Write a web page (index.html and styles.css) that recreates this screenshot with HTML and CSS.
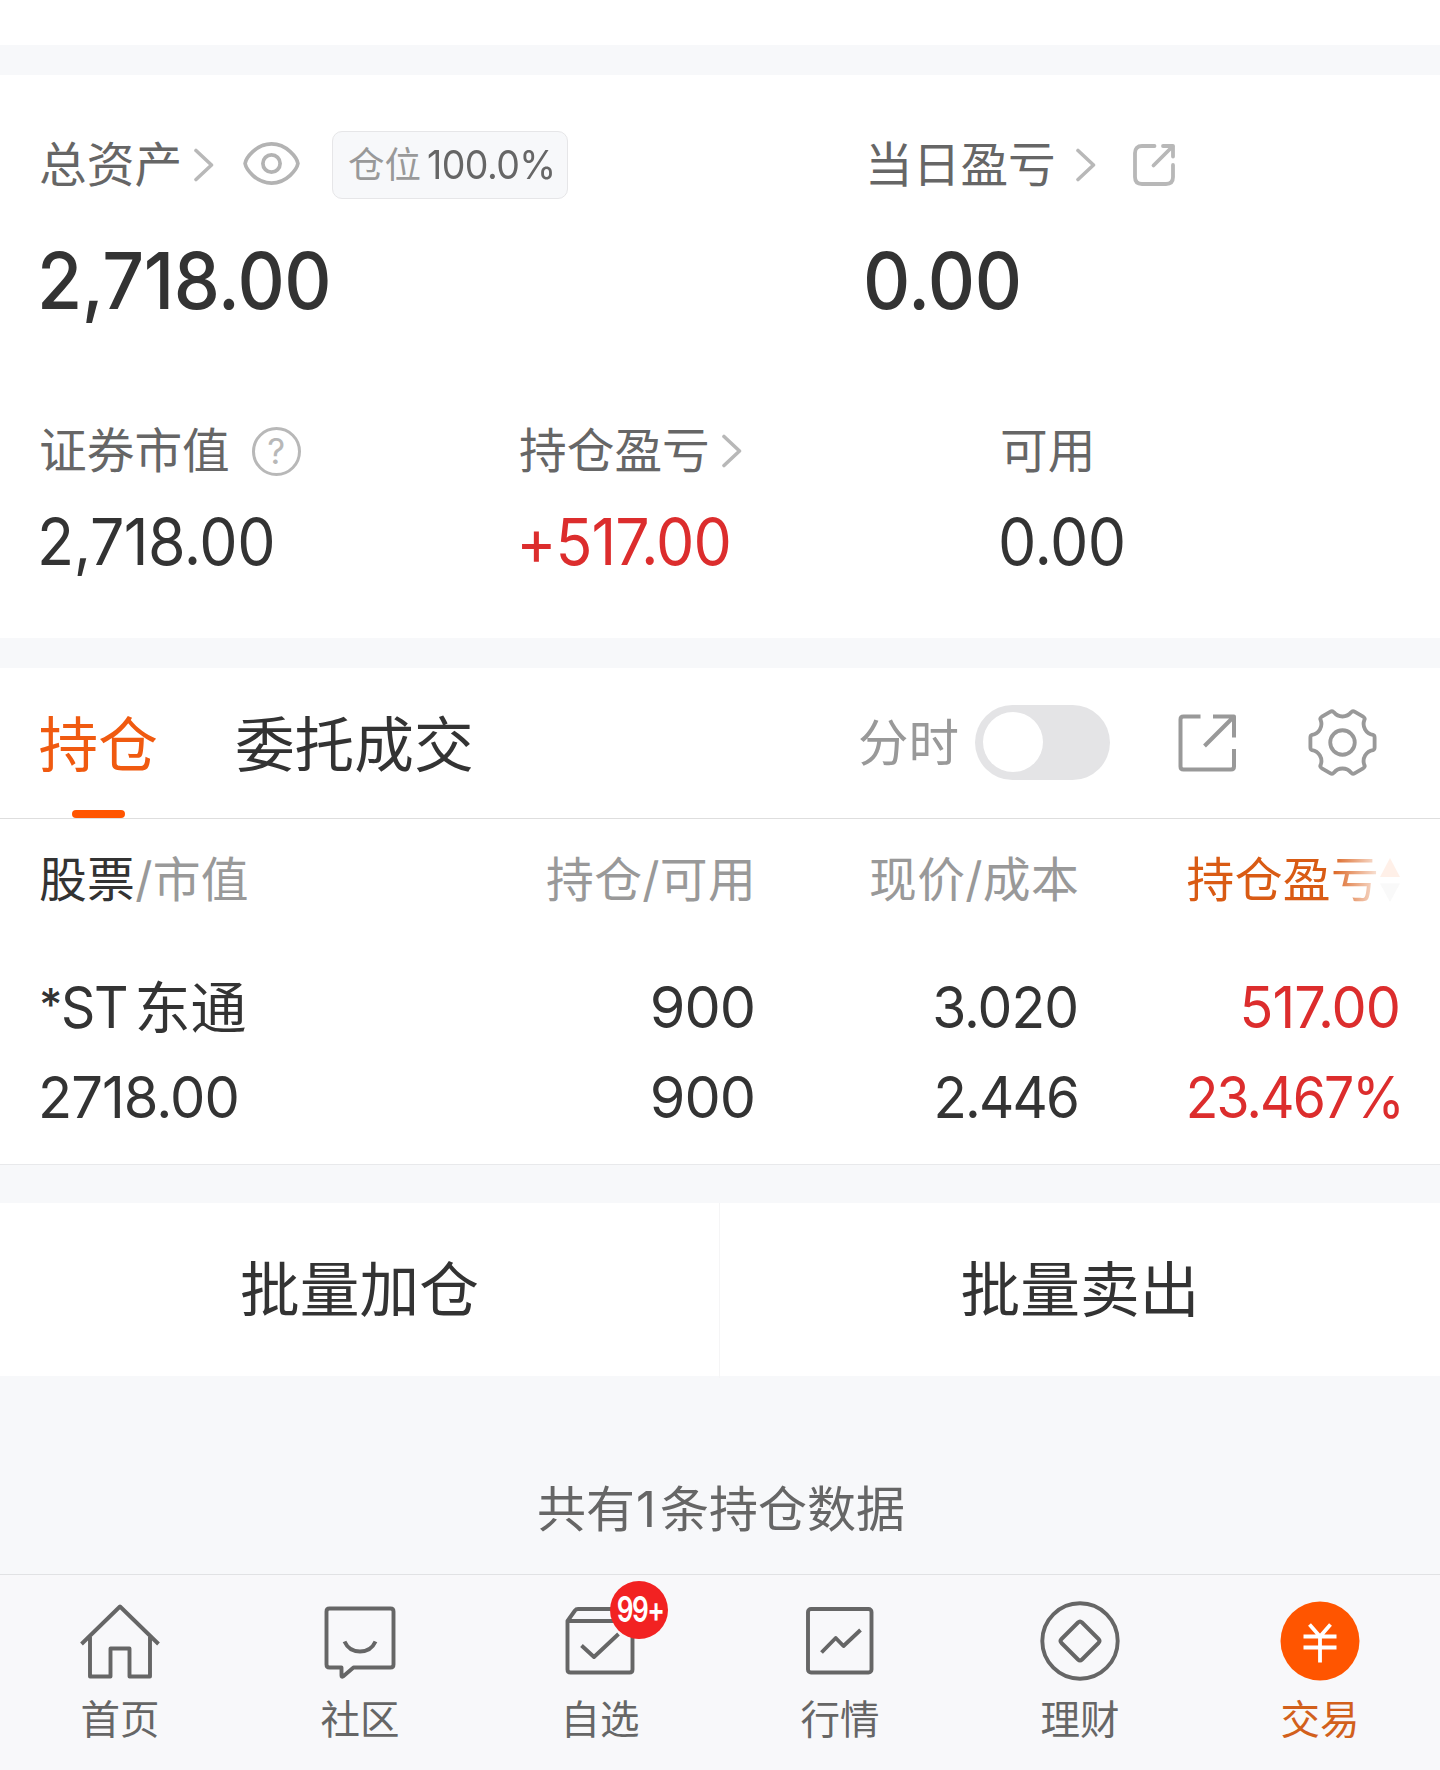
FILE: index.html
```html
<!DOCTYPE html>
<html lang="zh-CN">
<head>
<meta charset="utf-8">
<title>持仓</title>
<link rel="stylesheet" href="styles.css">
</head>
<body>
<svg class="defs" width="0" height="0">
  <symbol id="chevron" viewBox="0 0 20 34"><path d="M2 2.5 17.5 17 2 31.5" fill="none" stroke="#b8b8b8" stroke-width="3.6" stroke-linecap="round" stroke-linejoin="round"/></symbol>
</svg>
<div class="page">
  <section class="summary">
    <div class="totals">
      <div class="total">
        <div class="label-row">
          <span class="label">总资产</span>
          <svg class="chevron chevron-asset"><use href="#chevron"/></svg>
          <svg class="eye" width="57" height="45" viewBox="0 0 58 46" fill="none" stroke="#b3b3b3" stroke-width="3.8"><path d="M2 23C3 17.500 13 3 29 3S55 17.500 56 23C55 28.500 45 43 29 43S3 28.500 2 23Z"/><circle cx="29" cy="23" r="8.800"/></svg>
          <span class="chip"><span class="chip-name">仓位</span><span class="chip-value">100.0%</span></span>
        </div>
        <div class="big">2,718.00</div>
      </div>
      <div class="total">
        <div class="label-row">
          <span class="label">当日盈亏</span>
          <svg class="chevron chevron-day"><use href="#chevron"/></svg>
          <svg class="share" width="44" height="44" viewBox="0 0 44 44" fill="none" stroke="#b8b8b8" stroke-width="3.8" stroke-linecap="round" stroke-linejoin="round"><path d="M22.500 3H10Q3 3 3 10V34Q3 41 10 41H34Q41 41 41 34V22"/><path d="M31 3H41V13.500M41 3 21.500 22.500"/></svg>
        </div>
        <div class="big">0.00</div>
      </div>
    </div>
    <div class="details">
      <div class="detail">
        <div class="label-row"><span class="label">证券市值</span>
          <span class="help">?</span></div>
        <div class="mid">2,718.00</div>
      </div>
      <div class="detail">
        <div class="label-row"><span class="label">持仓盈亏</span><svg class="chevron chevron-hold"><use href="#chevron"/></svg></div>
        <div class="mid up plus">+517.00</div>
      </div>
      <div class="detail">
        <div class="label-row"><span class="label">可用</span></div>
        <div class="mid">0.00</div>
      </div>
    </div>
  </section>

  <section class="holdings">
    <div class="tabs">
      <div class="tab active">持仓</div>
      <div class="tab">委托成交</div>
      <div class="tools">
        <span class="tool-label">分时</span>
        <span class="switch"><span class="knob"></span></span>
        <svg class="open" width="60" height="60" viewBox="0 0 60 60" fill="none" stroke="#999" stroke-width="4" stroke-linejoin="round"><path d="M23.500 3.500H6.500Q3.500 3.500 3.500 6.500V53.500Q3.500 56.500 6.500 56.500H54Q57 56.500 57 53.500V36M36 3.500H57V24.500M57 3.500 27.500 33"/></svg>
        <svg class="gear" width="69" height="69" viewBox="-36 -36 72 72" fill="none" stroke="#999" stroke-width="4" stroke-linejoin="round"><path d="M-9-31.500A11.500 11.500 0 0 0 9-31.500Q10.500-33.500 13-32L21.500-27Q24-25 22.800-23.500A11.500 11.500 0 0 0 31.800-8Q33.500-7.500 33.500-5V5Q33.500 7.500 31.800 8A11.500 11.500 0 0 0 22.800 23.500Q24 25 21.500 27L13 32Q10.500 33.500 9 31.500A11.500 11.500 0 0 0-9 31.500Q-10.500 33.500-13 32L-21.500 27Q-24 25-22.800 23.500A11.500 11.500 0 0 0-31.800 8Q-33.500 7.500-33.500 5V-5Q-33.500-7.500-31.800-8A11.500 11.500 0 0 0-22.800-23.500Q-24-25-21.500-27L-13-32Q-10.500-33.500-9-31.500Z"/><circle r="12.800"/></svg>
      </div>
    </div>
    <div class="grid head">
      <div><b>股票</b>/市值</div>
      <div>持仓/可用</div>
      <div>现价/成本</div>
      <div class="sorted"><span>持仓盈亏</span><svg width="22" height="46" viewBox="0 0 22 46"><path d="M11 1 21 20H1Z" fill="#ff5500" opacity=".6"/><path d="M11 45 21 26.500H1Z" fill="#999" opacity=".4"/></svg></div>
    </div>
    <div class="grid line">
      <div class="name"><span class="star">*</span><span class="prefix">ST</span><span class="cjk">东通</span></div><div>900</div><div class="price">3.020</div><div class="up profit">517.00</div>
    </div>
    <div class="grid line">
      <div class="worth">2718.00</div><div>900</div><div class="cost">2.446</div><div class="up pct">23.467%</div>
    </div>
  </section>

  <div class="actions">
    <div class="action">批量加仓</div>
    <div class="action">批量卖出</div>
  </div>
  <div class="count">共有<span class="num">1</span>条持仓数据</div>

  <nav class="nav">
    <div class="item"><svg class="icon" viewBox="80 1601 80 80"><path d="M81.500 1644 120 1606.500 158.500 1644M90 1637V1676.500H110.500V1648.500H129.500V1676.500H150V1637"/></svg><span>首页</span></div>
    <div class="item"><svg class="icon" viewBox="320 1601 80 80"><path d="M329.500 1608.500H390.500Q393.500 1608.500 393.500 1611.500V1664.500Q393.500 1667.500 390.500 1667.500H353.500L343 1676.500Q341.500 1677.500 341.500 1675.500V1667.500H329.500Q326.500 1667.500 326.500 1664.500V1611.500Q326.500 1608.500 329.500 1608.500Z"/><path d="M344.500 1641.500Q349 1651.500 360 1651.500T375.500 1641.500"/></svg><span>社区</span></div>
    <div class="item"><svg class="icon" viewBox="560 1601 80 80"><path d="M567.500 1621H632.500V1669.500Q632.500 1672.500 629.500 1672.500H570.500Q567.500 1672.500 567.500 1669.500V1621L575 1610.500Q576 1609 578 1609H622Q624 1609 625 1610.500L632.500 1621M581.500 1645.500 594 1657 618.500 1634"/></svg><span>自选</span><em class="badge"><i>99+</i></em></div>
    <div class="item"><svg class="icon" viewBox="800 1601 80 80"><rect x="808" y="1609" width="63.500" height="63.500" rx="3"/><path d="M821.500 1652.500 835.700 1638 843.500 1646 860.500 1630"/></svg><span>行情</span></div>
    <div class="item"><svg class="icon" viewBox="1040 1601 80 80"><circle cx="1080" cy="1641" r="37.700"/><path d="M1078 1622.500Q1080 1620.500 1082 1622.500L1098.500 1639Q1100.500 1641 1098.500 1643L1082 1659.500Q1080 1661.500 1078 1659.500L1061.500 1643Q1059.500 1641 1061.500 1639Z"/></svg><span>理财</span></div>
    <div class="item current"><svg class="icon" viewBox="1280 1601 80 80"><circle cx="1320" cy="1641" r="39.500" fill="#ff5500" stroke="none"/><path stroke="#fff" stroke-width="3.8" d="M1309.500 1624.500 1320 1636.500 1330.500 1624.500M1303.500 1636.500H1336.500M1303.500 1647.500H1336.500M1320 1636V1662.500"/></svg><span>交易</span></div>
  </nav>
</div>
</body>
</html>
```
FILE: styles.css
```css
* { box-sizing: border-box; }
body {
  margin: 0;
  background: #f7f8fa;
  color: #333;
  font-family: Inter, "Noto Sans CJK SC", sans-serif;
  white-space: nowrap;
}
svg { display: block; flex: none; }
.defs { position: absolute; }
.page {
  width: 1440px;
  height: 1770px;
  overflow: hidden;
  display: flex;
  flex-direction: column;
  padding-top: 45px;
  background: linear-gradient(#fff 45px, #f7f8fa 45px);
}

/* Account summary */
.summary {
  height: 563px;
  margin-top: 30px;
  padding: 55px 0 0 39px;
  background: #fff;
}
.totals { display: grid; grid-template-columns: 826px 1fr; }
.label-row { display: flex; align-items: center; height: 70px; }
.label { font-size: 47.700px; line-height: 72px; color: #666; }
.chevron { width: 20px; height: 34px; }
.chevron-asset { margin-left: 12px; }
.chevron-day { margin-left: 20px; }
.chevron-hold { margin-left: 12px; }
.eye { margin-left: 29px; margin-top: -4px; }
.share { margin-left: 36px; }
.chip {
  display: flex;
  align-items: center;
  width: 236px;
  height: 68px;
  margin-left: 32px;
  padding-left: 15px;
  border: 1px solid #e6e6e8;
  border-radius: 10px;
  background: #f7f8fa;
  line-height: 67px;
}
.chip-name { font-size: 36.500px; color: #999; }
.chip-value { margin-left: 6px; font-size: 39.500px; letter-spacing: -.600px; color: #666; transform: scaleX(.95); transform-origin: left; }
.big, .mid { transform-origin: left; }
.big { margin-top: 30px; height: 100px; line-height: 101px; font-size: 78px; font-weight: 450; letter-spacing: -.500px; text-indent: -2px; transform: scaleX(.94); }
.details { display: grid; grid-template-columns: 480px 481px 1fr; margin-top: 86px; }
.help {
  width: 49px;
  height: 49px;
  margin-left: 22px;
  border: 3.500px solid #b8b8b8;
  border-radius: 50%;
  color: #b8b8b8;
  font-size: 35px;
  line-height: 42px;
  text-align: center;
}
.mid { margin-top: 15px; height: 80px; line-height: 81px; font-size: 64px; letter-spacing: -.500px; text-indent: -2px; transform: scaleX(.95); }
.plus { text-indent: -3px; letter-spacing: -1px; }
.up { color: #dc2d2d; }

/* Holdings */
.holdings { height: 497px; margin-top: 30px; background: #fff; border-bottom: 1px solid #e8e9eb; }
.tabs {
  display: flex;
  height: 151px;
  padding-left: 38.500px;
  border-bottom: 1px solid #dedede;
}
.tab { position: relative; margin-right: 77px; line-height: 154px; font-size: 59.700px; }
.active { color: #f05a10; }
.active::after {
  content: "";
  position: absolute;
  left: 33.500px;
  bottom: 0;
  width: 53px;
  height: 8px;
  border-radius: 4px;
  background: #ff5500;
}
.tools { display: flex; align-items: center; height: 149px; margin-left: auto; padding-right: 63px; }
.tool-label { font-size: 50.500px; line-height: 149px; color: #999; }
.switch { width: 135px; height: 75px; margin-left: 16px; padding: 7px 8px; border-radius: 38px; background: #e4e4e6; }
.knob { display: block; width: 60px; height: 60px; border-radius: 50%; background: #fff; }
.open { margin-left: 67px; }
.gear { margin-left: 71px; }
.grid {
  display: grid;
  grid-template-columns: 400px 317px 323px 322px;
  padding-left: 38px;
  text-align: right;
}
.grid > :first-child { text-align: left; }
.head { height: 120px; line-height: 122px; font-size: 47.800px; letter-spacing: .300px; color: #999; }
.head > div { position: relative; left: 1px; }
.head b { font-weight: 400; color: #333; }
.sorted {
  display: flex;
  align-items: center;
  justify-content: flex-end;
  color: #d95b14;
  -webkit-mask-image: linear-gradient(90deg, #000 250px, rgba(0,0,0,.15) 300px);
}
.line { height: 90px; line-height: 91px; font-size: 57.500px; letter-spacing: -1px; }
.head + .line { margin-top: 23px; }
.line .star { font-size: 45px; font-weight: 500; vertical-align: 7px; margin: 0 -2px 0 1px; line-height: 1; }
.prefix { display: inline-block; letter-spacing: -1.500px; transform: scaleX(.93); transform-origin: left; margin: 0 -2px 0 2px; }
.cjk { font-size: 56px; letter-spacing: 0; margin-left: 4px; }
.price, .cost, .profit, .pct { transform-origin: right; }
.worth { transform: scaleX(.975); transform-origin: left; }
.price { transform: scaleX(.96); }
.cost { transform: scaleX(.95); letter-spacing: -1.900px; }
.profit { transform: scaleX(.97); }
.pct { transform: scaleX(.93); letter-spacing: -2px; margin-right: -3px; }

/* Bulk actions */
.actions { display: grid; grid-template-columns: 720px 720px; height: 173px; margin-top: 38px; background: #fff; }
.action { line-height: 175px; font-size: 59.700px; text-align: center; }
.action:first-child { border-right: 1px solid #f5f5f6; }
.count { height: 198px; padding: 98px 0 0 2px; line-height: 71px; font-size: 49px; text-align: center; color: #666; }
.num { margin: 0 4px 0 1px; }

/* Bottom navigation */
.nav { display: flex; height: 196px; border-top: 1px solid #e1e2e4; background: #f8f8fa; }
.item {
  position: relative;
  flex: 1;
  display: flex;
  flex-direction: column;
  align-items: center;
  padding-top: 26px;
  font-size: 39.500px;
  line-height: 50px;
  color: #666;
}
.item span { margin-top: 14px; }
.icon { width: 80px; height: 80px; fill: none; stroke: #666; stroke-width: 3.900; stroke-linejoin: round; }
.current { color: #d2601c; }
.badge {
  position: absolute;
  left: 130px;
  top: 6px;
  width: 58px;
  height: 58px;
  border-radius: 50%;
  background: #f22222;
  color: #fff;
  font-size: 35px;
  font-style: normal;
  font-weight: 600;
  letter-spacing: -2px;
  line-height: 56px;
  display: flex;
  justify-content: center;
}
.badge i { font-style: normal; transform: translateX(1px) scaleX(.75); }
```
